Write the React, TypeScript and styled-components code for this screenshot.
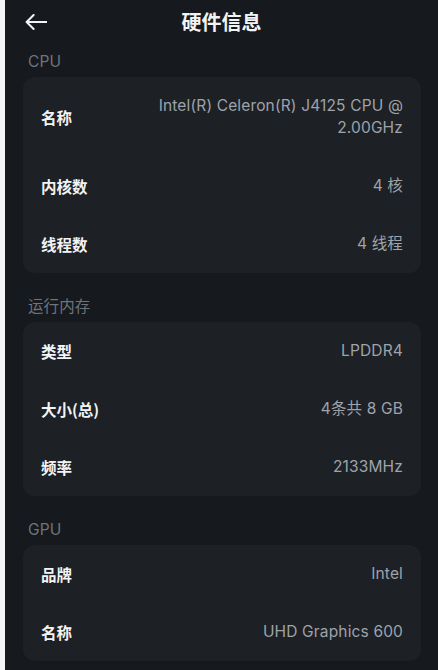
import React from "react";
import styled, { createGlobalStyle } from "styled-components";

const GlobalStyle = createGlobalStyle`
  html, body {
    margin: 0;
    padding: 0;
    background: #f4f4f5;
  }
  body {
    font-family: Inter, "Noto Sans CJK SC", sans-serif;
    -webkit-font-smoothing: antialiased;
  }
`;

const Page = styled.div`
  margin-left: 5px;
  min-height: 100vh;
  background: #16191d;
  color: #f2f3f5;
`;

const Header = styled.header`
  height: 44px;
  display: grid;
  grid-template-columns: 1fr auto 1fr;
  align-items: center;
  padding: 0 20px;
`;

const BackButton = styled.button`
  justify-self: start;
  display: flex;
  align-items: center;
  padding: 0;
  border: none;
  background: none;
  color: #f2f3f5;
  cursor: pointer;
`;

const Title = styled.h1`
  margin: 0;
  font-family: "Noto Sans CJK SC", sans-serif;
  font-size: 20px;
  font-weight: 700;
  line-height: 28px;
`;

const Content = styled.main`
  padding: 0 17px 0 18px;
`;

const Section = styled.section`
  padding-top: 24px;

  &:first-child {
    padding-top: 8px;
  }
`;

const SectionLabel = styled.div`
  padding-left: 5px;
  margin-bottom: 5px;
  font-size: 15.5px;
  line-height: 20px;
  letter-spacing: 0.1px;
  color: #6e747c;
`;

const Card = styled.div`
  background: #1d2025;
  border-radius: 12px;
`;

const Row = styled.div`
  min-height: 58px;
  box-sizing: border-box;
  padding: 18px;
  display: flex;
  align-items: center;
  justify-content: space-between;
  gap: 16px;
`;

const Label = styled.span`
  flex-shrink: 0;
  font-family: "Noto Sans CJK SC", sans-serif;
  font-size: 15.5px;
  font-weight: 700;
  color: #f2f3f5;
`;

const Value = styled.span`
  max-width: 252px;
  text-align: right;
  font-size: 15.5px;
  line-height: 22px;
  letter-spacing: 0.15px;
  color: #9fa3aa;
`;

type Item = { label: string; value: string };

const sections: { title: string; items: Item[] }[] = [
  {
    title: "CPU",
    items: [
      { label: "名称", value: "Intel(R) Celeron(R) J4125 CPU @ 2.00GHz" },
      { label: "内核数", value: "4 核" },
      { label: "线程数", value: "4 线程" },
    ],
  },
  {
    title: "运行内存",
    items: [
      { label: "类型", value: "LPDDR4" },
      { label: "大小(总)", value: "4条共 8 GB" },
      { label: "频率", value: "2133MHz" },
    ],
  },
  {
    title: "GPU",
    items: [
      { label: "品牌", value: "Intel" },
      { label: "名称", value: "UHD Graphics 600" },
    ],
  },
];

const BackArrow = () => (
  <svg width="22" height="16" viewBox="0 0 22 16" fill="none">
    <path
      d="M21.5 8H1.8M8.6 1L1.6 8l7 7"
      stroke="currentColor"
      strokeWidth="2"
      strokeLinecap="round"
      strokeLinejoin="round"
    />
  </svg>
);

const App: React.FC = () => (
  <Page>
    <GlobalStyle />
    <Header>
      <BackButton aria-label="返回">
        <BackArrow />
      </BackButton>
      <Title>硬件信息</Title>
      <span />
    </Header>
    <Content>
      {sections.map((section) => (
        <Section key={section.title}>
          <SectionLabel>{section.title}</SectionLabel>
          <Card>
            {section.items.map((item) => (
              <Row key={item.label}>
                <Label>{item.label}</Label>
                <Value>{item.value}</Value>
              </Row>
            ))}
          </Card>
        </Section>
      ))}
    </Content>
  </Page>
);

export default App;
